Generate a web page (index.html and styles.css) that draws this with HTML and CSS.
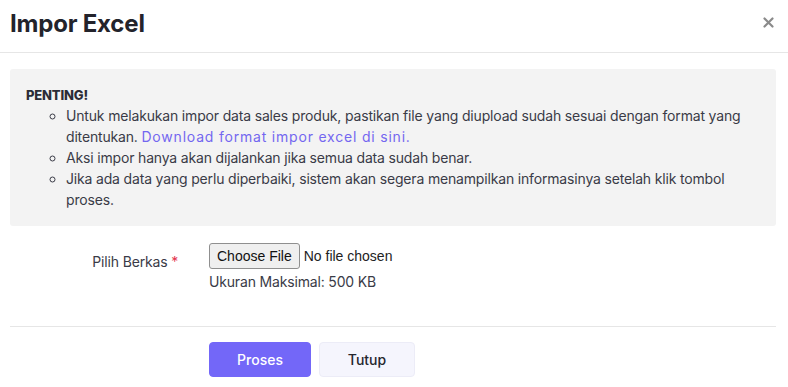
FILE: index.html
```html
<!DOCTYPE html>
<html lang="id">

<head>
    <meta charset="UTF-8">
    <meta name="viewport" content="width=device-width, initial-scale=1.0">
    <title>Impor Excel</title>
    <link rel="stylesheet" href="styles.css">
</head>

<body>
    <div class="modal">
        <div class="modal-header">
            <h2 class="modal-title">Impor Excel</h2>
            <button class="close-button" aria-label="Tutup">
                <svg width="11" height="11" viewBox="0 0 11 11">
                    <path d="M1.5 1.5 L9.5 9.5 M9.5 1.5 L1.5 9.5" stroke="#8a8a8a" stroke-width="2.2" stroke-linecap="round" />
                </svg>
            </button>
        </div>

        <div class="modal-body">
            <div class="alert">
                <strong class="alert-title">PENTING!</strong>
                <ul class="alert-list">
                    <li>Untuk melakukan impor data sales produk, pastikan file yang diupload sudah sesuai dengan format yang ditentukan. <a href="#" class="alert-link">Download format impor excel di sini.</a></li>
                    <li>Aksi impor hanya akan dijalankan jika semua data sudah benar.</li>
                    <li>Jika ada data yang perlu diperbaiki, sistem akan segera menampilkan informasinya setelah klik tombol proses.</li>
                </ul>
            </div>

            <div class="form-row">
                <label class="form-label" for="berkas">Pilih Berkas <span class="required">*</span></label>
                <div class="form-field">
                    <input type="file" id="berkas" class="file-input">
                    <small class="form-help">Ukuran Maksimal: 500 KB</small>
                </div>
            </div>
        </div>

        <div class="modal-footer">
            <div></div>
            <div class="footer-buttons">
                <button class="btn btn-primary">Proses</button>
                <button class="btn btn-light">Tutup</button>
            </div>
        </div>
    </div>
</body>

</html>
```

FILE: styles.css
```css
/* Global settings */
*, *::before, *::after {
    box-sizing: border-box;
}

body,
html {
    margin: 0;
    padding: 0;
    background: #fff;
    font-family: Inter, "Noto Sans", sans-serif;
    color: #3a3b47;
    letter-spacing: -0.17px;
}

.modal {
    width: 100%;
}

.modal-header {
    display: flex;
    justify-content: space-between;
    align-items: center;
    height: 53px;
    padding: 0 12px 0 10px;
    border-bottom: 1px solid #e6e6e6;
}

.modal-title {
    margin: 0 0 6px;
    font-size: 24px;
    font-weight: 700;
    letter-spacing: -0.2px;
    color: #23232b;
}

.close-button {
    border: none;
    background: none;
    padding: 0;
    margin: 0 2px 7px 0;
    cursor: pointer;
    display: flex;
}

.modal-body {
    padding: 16px 12px 0 10px;
}

.alert {
    background-color: #f3f3f3;
    border-radius: 3px;
    padding: 16px 16px;
    font-size: 14px;
    line-height: 21px;
}

.alert-title {
    display: block;
    font-size: 13px;
    font-weight: 800;
    color: #2b2c36;
    line-height: 20px;
}

.alert-list {
    margin: 0;
    padding-left: 40px;
    list-style: circle;
}

.alert-link {
    color: #7367f0;
    text-decoration: none;
    letter-spacing: 0.8px;
}

.form-row {
    display: grid;
    grid-template-columns: 168px 1fr;
    column-gap: 31px;
    padding: 17px 0 34px;
    font-size: 14px;
}

.form-label {
    text-align: right;
    padding-top: 10px;
    color: #3a3b47;
}

.required {
    color: #e3364d;
}

.form-field {
    display: flex;
    flex-direction: column;
    align-items: flex-start;
}

.file-input {
    font-family: "Liberation Sans", Arial, sans-serif;
    font-size: 14px;
    letter-spacing: 0;
    color: #222;
}

.file-input::file-selector-button {
    font-family: "Liberation Sans", Arial, sans-serif;
    font-size: 14px;
    padding: 3px 7px;
    margin-right: 4px;
    height: 26px;
    background: #efefef;
    border: 1px solid #8f8f8f;
    border-radius: 3px;
    color: #111;
}

.form-help {
    font-size: 14px;
    margin-top: 3px;
    line-height: 20px;
    color: #3a3b47;
}

.modal-footer {
    display: grid;
    grid-template-columns: 168px 1fr;
    column-gap: 31px;
    margin: 0 12px 0 10px;
    padding-top: 15px;
    border-top: 1px solid #e6e6e6;
}

.footer-buttons {
    display: flex;
    gap: 8px;
}

.btn {
    height: 35px;
    border-radius: 4px;
    font-family: Inter, "Noto Sans", sans-serif;
    font-size: 14px;
    font-weight: 500;
    cursor: pointer;
}

.btn-primary {
    width: 102px;
    background-color: #7367f8;
    border: 1px solid #7367f8;
    color: #fff;
}

.btn-light {
    width: 96px;
    background-color: #f5f5fd;
    border: 1px solid #ececf7;
    color: #26262e;
}
```
